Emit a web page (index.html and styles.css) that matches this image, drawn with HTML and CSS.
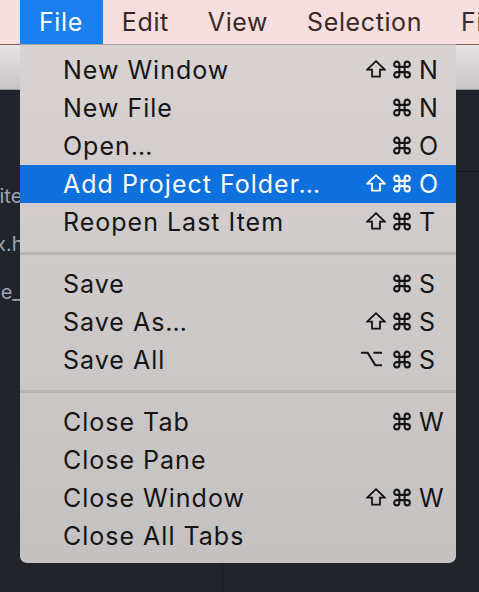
FILE: index.html
```html
<!DOCTYPE html>
<html>
<head>
<meta charset="utf-8">
<link rel="stylesheet" href="styles.css">
</head>
<body>
<div class="app">
  <div class="menubar">
    <span class="mb-item active">File</span>
    <span class="mb-item">Edit</span>
    <span class="mb-item">View</span>
    <span class="mb-item">Selection</span>
    <span class="mb-item">Find</span>
  </div>
  <div class="toolbar"></div>
  <div class="workspace">
    <div class="tree">
      <div class="tree-item t1">website</div>
      <div class="tree-item t2">index.html</div>
      <div class="tree-item t3">style_guide</div>
    </div>
    <div class="editor">
      <div class="tabbar"></div>
    </div>
  </div>

  <div class="menu">
    <div class="mi"><span class="label">New Window</span><span class="mods"><svg class="ic shift" viewBox="0 0 20 18"><path d="M10 1.2 L18.8 9.6 H14 V16.6 H6 V9.6 H1.2 Z"/></svg><svg class="ic cmd" viewBox="0 0 24 24"><path d="M18 3a3 3 0 0 0-3 3v12a3 3 0 0 0 3 3 3 3 0 0 0 3-3 3 3 0 0 0-3-3H6a3 3 0 0 0-3 3 3 3 0 0 0 3 3 3 3 0 0 0 3-3V6a3 3 0 0 0-3-3 3 3 0 0 0-3 3 3 3 0 0 0 3 3h12a3 3 0 0 0 3-3 3 3 0 0 0-3-3z"/></svg></span><span class="key">N</span></div>
    <div class="mi"><span class="label">New File</span><span class="mods"><svg class="ic cmd" viewBox="0 0 24 24"><path d="M18 3a3 3 0 0 0-3 3v12a3 3 0 0 0 3 3 3 3 0 0 0 3-3 3 3 0 0 0-3-3H6a3 3 0 0 0-3 3 3 3 0 0 0 3 3 3 3 0 0 0 3-3V6a3 3 0 0 0-3-3 3 3 0 0 0-3 3 3 3 0 0 0 3 3h12a3 3 0 0 0 3-3 3 3 0 0 0-3-3z"/></svg></span><span class="key">N</span></div>
    <div class="mi"><span class="label">Open…</span><span class="mods"><svg class="ic cmd" viewBox="0 0 24 24"><path d="M18 3a3 3 0 0 0-3 3v12a3 3 0 0 0 3 3 3 3 0 0 0 3-3 3 3 0 0 0-3-3H6a3 3 0 0 0-3 3 3 3 0 0 0 3 3 3 3 0 0 0 3-3V6a3 3 0 0 0-3-3 3 3 0 0 0-3 3 3 3 0 0 0 3 3h12a3 3 0 0 0 3-3 3 3 0 0 0-3-3z"/></svg></span><span class="key">O</span></div>
    <div class="mi hl"><span class="label">Add Project Folder…</span><span class="mods"><svg class="ic shift" viewBox="0 0 20 18"><path d="M10 1.2 L18.8 9.6 H14 V16.6 H6 V9.6 H1.2 Z"/></svg><svg class="ic cmd" viewBox="0 0 24 24"><path d="M18 3a3 3 0 0 0-3 3v12a3 3 0 0 0 3 3 3 3 0 0 0 3-3 3 3 0 0 0-3-3H6a3 3 0 0 0-3 3 3 3 0 0 0 3 3 3 3 0 0 0 3-3V6a3 3 0 0 0-3-3 3 3 0 0 0-3 3 3 3 0 0 0 3 3h12a3 3 0 0 0 3-3 3 3 0 0 0-3-3z"/></svg></span><span class="key">O</span></div>
    <div class="mi"><span class="label">Reopen Last Item</span><span class="mods"><svg class="ic shift" viewBox="0 0 20 18"><path d="M10 1.2 L18.8 9.6 H14 V16.6 H6 V9.6 H1.2 Z"/></svg><svg class="ic cmd" viewBox="0 0 24 24"><path d="M18 3a3 3 0 0 0-3 3v12a3 3 0 0 0 3 3 3 3 0 0 0 3-3 3 3 0 0 0-3-3H6a3 3 0 0 0-3 3 3 3 0 0 0 3 3 3 3 0 0 0 3-3V6a3 3 0 0 0-3-3 3 3 0 0 0-3 3 3 3 0 0 0 3 3h12a3 3 0 0 0 3-3 3 3 0 0 0-3-3z"/></svg></span><span class="key">T</span></div>
    <div class="sep"></div>
    <div class="mi"><span class="label">Save</span><span class="mods"><svg class="ic cmd" viewBox="0 0 24 24"><path d="M18 3a3 3 0 0 0-3 3v12a3 3 0 0 0 3 3 3 3 0 0 0 3-3 3 3 0 0 0-3-3H6a3 3 0 0 0-3 3 3 3 0 0 0 3 3 3 3 0 0 0 3-3V6a3 3 0 0 0-3-3 3 3 0 0 0-3 3 3 3 0 0 0 3 3h12a3 3 0 0 0 3-3 3 3 0 0 0-3-3z"/></svg></span><span class="key">S</span></div>
    <div class="mi"><span class="label">Save As…</span><span class="mods"><svg class="ic shift" viewBox="0 0 20 18"><path d="M10 1.2 L18.8 9.6 H14 V16.6 H6 V9.6 H1.2 Z"/></svg><svg class="ic cmd" viewBox="0 0 24 24"><path d="M18 3a3 3 0 0 0-3 3v12a3 3 0 0 0 3 3 3 3 0 0 0 3-3 3 3 0 0 0-3-3H6a3 3 0 0 0-3 3 3 3 0 0 0 3 3 3 3 0 0 0 3-3V6a3 3 0 0 0-3-3 3 3 0 0 0-3 3 3 3 0 0 0 3 3h12a3 3 0 0 0 3-3 3 3 0 0 0-3-3z"/></svg></span><span class="key">S</span></div>
    <div class="mi"><span class="label">Save All</span><span class="mods"><svg class="ic opt" viewBox="0 0 24 18"><path d="M1 2.5 H8 L16 15.5 H23 M14 2.5 H23"/></svg><svg class="ic cmd" viewBox="0 0 24 24"><path d="M18 3a3 3 0 0 0-3 3v12a3 3 0 0 0 3 3 3 3 0 0 0 3-3 3 3 0 0 0-3-3H6a3 3 0 0 0-3 3 3 3 0 0 0 3 3 3 3 0 0 0 3-3V6a3 3 0 0 0-3-3 3 3 0 0 0-3 3 3 3 0 0 0 3 3h12a3 3 0 0 0 3-3 3 3 0 0 0-3-3z"/></svg></span><span class="key">S</span></div>
    <div class="sep"></div>
    <div class="mi"><span class="label">Close Tab</span><span class="mods"><svg class="ic cmd" viewBox="0 0 24 24"><path d="M18 3a3 3 0 0 0-3 3v12a3 3 0 0 0 3 3 3 3 0 0 0 3-3 3 3 0 0 0-3-3H6a3 3 0 0 0-3 3 3 3 0 0 0 3 3 3 3 0 0 0 3-3V6a3 3 0 0 0-3-3 3 3 0 0 0-3 3 3 3 0 0 0 3 3h12a3 3 0 0 0 3-3 3 3 0 0 0-3-3z"/></svg></span><span class="key">W</span></div>
    <div class="mi"><span class="label">Close Pane</span></div>
    <div class="mi"><span class="label">Close Window</span><span class="mods"><svg class="ic shift" viewBox="0 0 20 18"><path d="M10 1.2 L18.8 9.6 H14 V16.6 H6 V9.6 H1.2 Z"/></svg><svg class="ic cmd" viewBox="0 0 24 24"><path d="M18 3a3 3 0 0 0-3 3v12a3 3 0 0 0 3 3 3 3 0 0 0 3-3 3 3 0 0 0-3-3H6a3 3 0 0 0-3 3 3 3 0 0 0 3 3 3 3 0 0 0 3-3V6a3 3 0 0 0-3-3 3 3 0 0 0-3 3 3 3 0 0 0 3 3h12a3 3 0 0 0 3-3 3 3 0 0 0-3-3z"/></svg></span><span class="key">W</span></div>
    <div class="mi"><span class="label">Close All Tabs</span></div>
  </div>
</div>
</body>
</html>
```

FILE: styles.css
```css
html, body {
  margin: 0;
  padding: 0;
}
body {
  width: 479px;
  height: 592px;
  overflow: hidden;
  background: #21252b;
  font-family: Inter, "Liberation Sans", sans-serif;
}
.app {
  position: relative;
  width: 479px;
  height: 592px;
  display: flex;
  flex-direction: column;
}
.menubar {
  height: 44px;
  flex: none;
  display: flex;
  padding-left: 20px;
  background: #f6dfde;
  border-bottom: 1px solid #8c5858;
  white-space: nowrap;
  overflow: hidden;
}
.mb-item {
  padding: 0 20px 0 19px;
  font-size: 25px;
  letter-spacing: 0.6px;
  line-height: 44px;
  color: #3a2727;
}
.mb-item.active {
  background: #1a80f0;
  color: #fff;
}
.toolbar {
  height: 44px;
  flex: none;
  background: linear-gradient(to bottom, #e6e4e4, #c6c4c4);
  border-bottom: 1px solid #9a9898;
}
.workspace {
  flex: 1;
  display: flex;
}
.tree {
  width: 222px;
  border-right: 1px solid #181a1f;
  padding-top: 82px;
  overflow: hidden;
}
.tree-item {
  font-size: 20px;
  line-height: 48px;
  color: #9da5b4;
  white-space: nowrap;
}
.t1 { margin-left: -51px; }
.t2 { margin-left: -45px; }
.t3 { margin-left: -33px; }
.editor {
  flex: 1;
}
.tabbar {
  height: 81px;
  border-bottom: 1px solid #181a1f;
}
.menu {
  position: absolute;
  left: 20px;
  top: 44px;
  width: 436px;
  box-sizing: border-box;
  padding: 6px 0 8px;
  border-top: 1px solid #a9a3a3;
  border-radius: 0 0 7px 7px;
  background: linear-gradient(to bottom, #d8d2d1, #c5c1c1);
}
.mi {
  height: 38px;
  display: flex;
  align-items: center;
  padding-left: 43px;
  font-size: 25px;
  letter-spacing: 1px;
  color: #141414;
  white-space: nowrap;
}
.mi.hl {
  background: #0d70dd;
  color: #fff;
}
.label {
  flex: 1;
}
.mods {
  display: flex;
  align-items: center;
  gap: 5px;
  margin-right: 6px;
  margin-top: -2px;
}
.ic {
  fill: none;
  stroke: currentColor;
  stroke-linejoin: miter;
}
.shift {
  width: 20px;
  height: 18px;
  stroke-width: 1.8;
}
.cmd {
  width: 22px;
  height: 21px;
  stroke-width: 2.3;
}
.opt {
  width: 23px;
  height: 18px;
  stroke-width: 2.2;
  margin-right: 3px;
}
.key {
  width: 37px;
}
.sep {
  height: 24px;
  display: flex;
  align-items: center;
}
.sep::before {
  content: "";
  display: block;
  width: 100%;
  height: 3px;
  background: #b9b3b3;
}
```
